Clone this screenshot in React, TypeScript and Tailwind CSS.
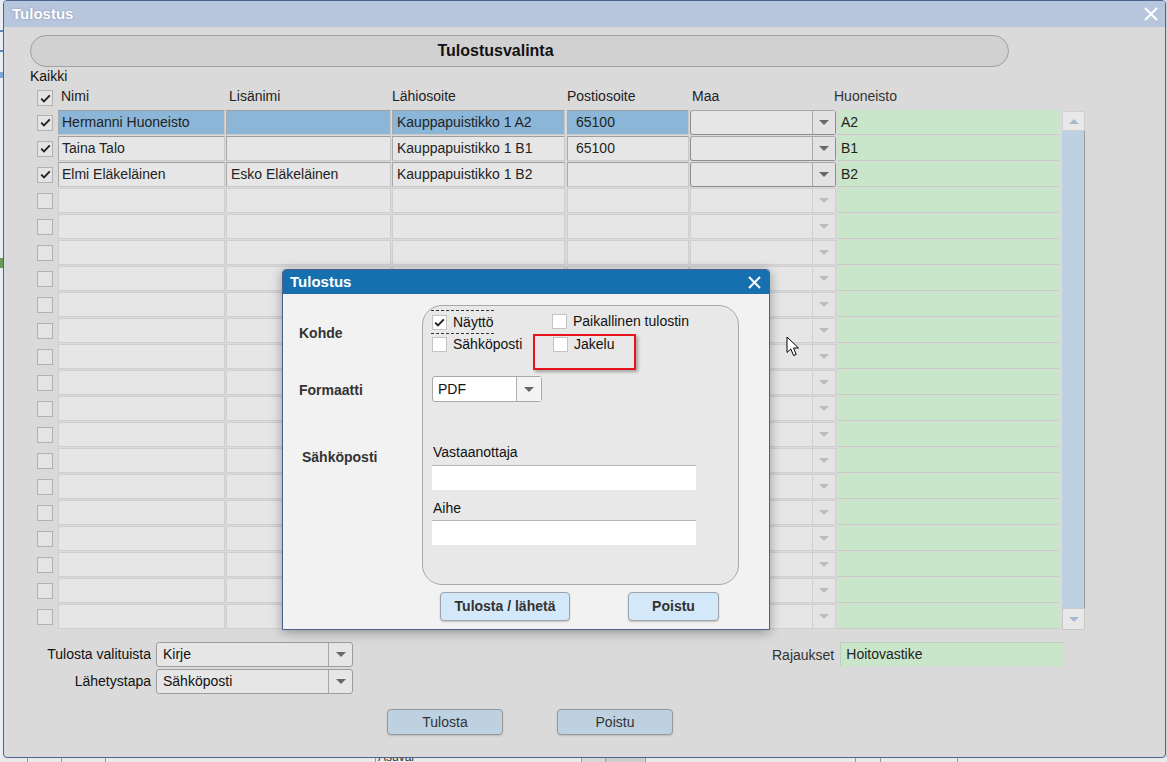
import React from 'react';

type Row = { c: boolean; n: string; l: string; a: string; p: string; h: string; sel?: boolean };

const data: Row[] = [
  { c: true, n: 'Hermanni Huoneisto', l: '', a: 'Kauppapuistikko 1 A2', p: '65100', h: 'A2', sel: true },
  { c: true, n: 'Taina Talo', l: '', a: 'Kauppapuistikko 1 B1', p: '65100', h: 'B1' },
  { c: true, n: 'Elmi Eläkeläinen', l: 'Esko Eläkeläinen', a: 'Kauppapuistikko 1 B2', p: '', h: 'B2' },
];

const rows: (Row | undefined)[] = Array.from({ length: 20 }, (_, i) => data[i]);

function Tick() {
  return (
    <svg width="11" height="9" viewBox="0 0 11 9">
      <path d="M1.2 4.6 L4 7.4 L9.8 1.4" stroke="#222" strokeWidth="1.9" fill="none" />
    </svg>
  );
}

function TableCheck({ checked }: { checked?: boolean }) {
  return (
    <div className="w-[16px] h-[16px] border border-[#b2b2b2] bg-[#e4e4e4] flex items-center justify-center">
      {checked ? <Tick /> : null}
    </div>
  );
}

function DlgCheck({ checked }: { checked?: boolean }) {
  return (
    <div className="w-[15px] h-[15px] border border-[#c4c4c4] bg-white flex items-center justify-center shrink-0">
      {checked ? <Tick /> : null}
    </div>
  );
}

function TriDark() {
  return <span className="w-0 h-0 border-l-[5px] border-r-[5px] border-t-[5px] border-l-transparent border-r-transparent border-t-[#686868]" />;
}
function TriLight() {
  return <span className="w-0 h-0 border-l-[5px] border-r-[5px] border-t-[5px] border-l-transparent border-r-transparent border-t-[#bcbcbc]" />;
}

function TableRow({ r }: { r?: Row }) {
  const base = r
    ? 'border border-[#c9c9c9] border-t-[#9e9e9e] border-l-[#a9a9a9]'
    : 'border border-[#cfcfcf]';
  const bg = r?.sel ? 'bg-[#8bb6d8]' : 'bg-[#e6e6e6]';
  return (
    <div className="flex h-[26px] items-start">
      <div className="w-[21px] h-[25px] flex items-center">
        <TableCheck checked={r?.c} />
      </div>
      <div className={`w-[167px] mr-[1px] h-[25px] ${base} ${bg} pl-[3px] leading-[23px] whitespace-nowrap overflow-hidden`}>{r?.n}</div>
      <div className={`w-[165px] mr-[1px] h-[25px] ${base} ${bg} pl-[4px] leading-[23px] whitespace-nowrap overflow-hidden`}>{r?.l}</div>
      <div className={`w-[173px] mr-[2px] h-[25px] ${base} ${bg} pl-[4px] leading-[23px] whitespace-nowrap overflow-hidden`}>{r?.a}</div>
      <div className={`w-[122px] mr-[1px] h-[25px] ${base} ${bg} pl-[8px] leading-[23px] whitespace-nowrap overflow-hidden`}>{r?.p}</div>
      {r ? (
        <div className="w-[146px] mr-[1px] h-[25px] border border-[#8e8e8e] border-t-[#a8a8a8] rounded-[3px] bg-[#e6e6e6] flex">
          <div className="flex-1" />
          <div className="w-[23px] h-full border-l border-[#a8a8a8] bg-[#e2e2e2] flex items-center justify-center">
            <TriDark />
          </div>
        </div>
      ) : (
        <div className="w-[146px] mr-[1px] h-[25px] border border-[#d0d0d0] bg-[#e6e6e6] flex">
          <div className="flex-1" />
          <div className="w-[23px] h-full border-l border-[#cfcfcf] bg-[#e4e4e4] flex items-center justify-center">
            <TriLight />
          </div>
        </div>
      )}
      <div className="w-[222px] h-[25px] border-b border-[#c3cfc3] bg-[#c9e6ca] pl-[4px] leading-[24px] text-[#222]">{r?.h}</div>
    </div>
  );
}

function Select({ value, h }: { value: string; h: string }) {
  return (
    <div className={`w-[197px] ${h} border border-[#9c9c9c] rounded-[3px] bg-[#e6e6e6] flex`}>
      <div className="flex-1 pl-[6px] flex items-center text-[#111]">{value}</div>
      <div className="w-[24px] h-full border-l border-[#a8a8a8] flex items-center justify-center">
        <TriDark />
      </div>
    </div>
  );
}

export default function App() {
  return (
    <div className="relative w-[1167px] h-[762px] overflow-hidden bg-[#e6e9ee] font-['Liberation_Sans',Arial,sans-serif] text-[14px] text-[#222]">
      <div className="flex h-[758px]">
        {/* backdrop strip left */}
        <div className="w-[3px] h-full bg-[#e9eef4] flex flex-col">
          <div className="h-[30px]" />
          <div className="h-[2px] bg-[#5b86c2]" />
          <div className="h-[18px]" />
          <div className="h-[2px] bg-[#5b86c2]" />
          <div className="h-[20px]" />
          <div className="h-[6px] bg-[#7aa6d8]" />
          <div className="h-[180px]" />
          <div className="h-[10px] bg-[#6a9a5a]" />
        </div>
        {/* main window */}
        <div className="w-[1163px] h-[758px] border border-[#4d6390] rounded-[4px] bg-[#dadada] flex flex-col overflow-hidden">
          <div className="h-[26px] shrink-0 bg-[#b7c6dd] flex items-center justify-between pl-[8px] pr-[7px]">
            <span className="text-white font-bold text-[15px] [text-shadow:0_0_2px_rgba(80,100,140,0.6)]">Tulostus</span>
            <svg width="14" height="14" viewBox="0 0 14 14">
              <path d="M1 1 L13 13 M13 1 L1 13" stroke="#ffffff" strokeWidth="2" />
            </svg>
          </div>

          {/* header pill */}
          <div className="mt-[8px] ml-[26px] w-[979px] h-[32px] rounded-full border border-[#a0a0a0] bg-[#d1d1d1] flex items-center justify-center pr-[48px]">
            <span className="font-bold text-[16px] text-[#111]">Tulostusvalinta</span>
          </div>

          <div className="mt-[1px] ml-[26px] leading-[16px] h-[16px] text-[#111]">Kaikki</div>

          {/* header row */}
          <div className="mt-[3px] ml-[33px] h-[23px] flex items-start leading-[16px]">
            <div className="w-[21px] pt-[3px]">
              <TableCheck checked />
            </div>
            <div className="w-[168px] pl-[3px] pt-[1px]">Nimi</div>
            <div className="w-[166px] pl-[3px] pt-[1px]">Lisänimi</div>
            <div className="w-[175px] pt-[1px]">Lähiosoite</div>
            <div className="w-[125px] pt-[1px]">Postiosoite</div>
            <div className="w-[142px] pt-[1px]">Maa</div>
            <div className="w-[225px] pt-[1px] text-[#333]">Huoneisto</div>
          </div>

          {/* table */}
          <div className="ml-[33px] flex h-[520px]">
            <div className="flex flex-col">
              {rows.map((r, i) => (
                <TableRow key={i} r={r} />
              ))}
            </div>
            <div className="ml-[3px] mt-[1px] w-[23px] h-[519px] flex flex-col">
              <div className="h-[20px] bg-[#e8e8e8] border border-[#d0d0d0] flex items-center justify-center">
                <span className="w-0 h-0 border-l-[5px] border-r-[5px] border-b-[5px] border-l-transparent border-r-transparent border-b-[#a7b9d1]" />
              </div>
              <div className="flex-1 bg-[#bed1e2] border-r border-[#9a9a9a]" />
              <div className="h-[22px] bg-[#e8e8e8] border border-[#c8c8c8] flex items-center justify-center">
                <span className="w-0 h-0 border-l-[5px] border-r-[5px] border-t-[5px] border-l-transparent border-r-transparent border-t-[#a7b9d1]" />
              </div>
            </div>
          </div>

          {/* bottom area */}
          <div className="mt-[12px] flex items-start">
            <div className="flex flex-col">
              <div className="flex items-center h-[25px]">
                <div className="w-[147px] text-right text-[#111]">Tulosta valituista</div>
                <div className="ml-[5px]">
                  <Select value="Kirje" h="h-[25px]" />
                </div>
              </div>
              <div className="flex items-center h-[25px] mt-[2px]">
                <div className="w-[147px] text-right text-[#111]">Lähetystapa</div>
                <div className="ml-[5px]">
                  <Select value="Sähköposti" h="h-[25px]" />
                </div>
              </div>
            </div>
            <div className="ml-[419px] flex items-center gap-[6px] h-[24px]">
              <span className="text-[#333] mt-[3px]">Rajaukset</span>
              <div className="w-[224px] h-[24px] bg-[#c9e6ca] border-t border-l border-[#bfcfbf] pl-[5px] flex items-center text-[#222]">
                Hoitovastike
              </div>
            </div>
          </div>

          <div className="mt-[15px] ml-[383px] flex gap-[54px]">
            <div className="w-[116px] h-[26px] rounded-[4px] border border-[#999] bg-[#bdd1e1] flex items-center justify-center text-[#333] shadow-[0_1px_2px_rgba(0,0,0,0.15)]">
              Tulosta
            </div>
            <div className="w-[116px] h-[26px] rounded-[4px] border border-[#999] bg-[#bdd1e1] flex items-center justify-center text-[#333] shadow-[0_1px_2px_rgba(0,0,0,0.15)]">
              Poistu
            </div>
          </div>
        </div>
        <div className="w-[1px] h-full bg-[#cfd3d8]" />
      </div>

      {/* bottom backdrop strip */}
      <div className="h-[4px] flex bg-[#e9e9e9] text-[12px] leading-[10px] overflow-hidden">
        <div className="w-[28px] border-r border-[#9a9a9a]" />
        <div className="w-[34px] border-r border-[#9a9a9a]" />
        <div className="w-[44px] border-r border-[#9a9a9a]" />
        <div className="w-[270px] border-r border-[#9a9a9a]" />
        <div className="w-[206px] border-r border-[#9a9a9a] pl-[2px] -mt-[6px] text-[#333]">Asuval</div>
        <div className="w-[24px] border-r border-[#9a9a9a] bg-[#d8d8d8]" />
        <div className="w-[40px] border-r border-[#9a9a9a] bg-[#cdcdcd]" />
        <div className="w-[210px] border-r border-[#9a9a9a]" />
        <div className="w-[25px] border-r border-[#9a9a9a]" />
        <div className="w-[77px] border-r border-[#9a9a9a]" />
      </div>

      {/* dialog */}
      <div className="absolute left-[282px] top-[269px] w-[488px] h-[361px] border border-[#4a5f8c] rounded-t-[4px] bg-[#f2f2f2] shadow-[0_2px_12px_rgba(0,0,0,0.35)] flex flex-col">
        <div className="h-[24px] shrink-0 bg-[#1670af] rounded-t-[3px] flex items-center justify-between pl-[7px] pr-[8px]">
          <span className="text-white font-bold text-[15px]">Tulostus</span>
          <svg width="13" height="13" viewBox="0 0 13 13">
            <path d="M1 1 L12 12 M12 1 L1 12" stroke="#ffffff" strokeWidth="2" />
          </svg>
        </div>
        <div className="flex">
          <div className="w-[139px] flex flex-col leading-[16px] font-bold text-[#333]">
            <div className="pt-[31px] pl-[16px]">Kohde</div>
            <div className="mt-[41px] pl-[16px]">Formaatti</div>
            <div className="mt-[51px] pl-[19px]">Sähköposti</div>
          </div>
          <div className="mt-[11px] w-[317px] h-[280px] rounded-[20px] border border-[#a8a8a8] bg-[#e8e8e8] flex flex-col pl-[8px] pt-[4px]">
            <div className="flex h-[24px]">
              <div className="w-[121px]">
                <div className="w-[63px] h-[24px] border-y border-dashed border-[#333] flex items-center pl-[1px]">
                  <DlgCheck checked />
                  <span className="ml-[6px] text-[#111]">Näyttö</span>
                </div>
              </div>
              <div className="flex items-center -mt-[2px]">
                <DlgCheck />
                <span className="ml-[6px] text-[#111]">Paikallinen tulostin</span>
              </div>
            </div>
            <div className="flex h-[16px] mt-[2px]">
              <div className="w-[121px] flex items-center pl-[1px]">
                <DlgCheck />
                <span className="ml-[6px] text-[#111]">Sähköposti</span>
              </div>
              <div className="flex items-center pl-[1px]">
                <DlgCheck />
                <span className="ml-[6px] text-[#111]">Jakelu</span>
              </div>
            </div>
            <div className="mt-[24px] ml-[1px] w-[110px] h-[26px] border border-[#a8a8a8] rounded-[3px] bg-white flex">
              <div className="flex-1 pl-[5px] flex items-center text-[#111]">PDF</div>
              <div className="w-[25px] h-full border-l border-[#b0b0b0] bg-[#f4f4f4] flex items-center justify-center">
                <TriDark />
              </div>
            </div>
            <div className="mt-[42px] ml-[2px] leading-[16px] text-[#111]">Vastaanottaja</div>
            <div className="mt-[5px] ml-[1px] w-[264px] h-[25px] bg-white border-t border-[#b4b4b4]" />
            <div className="mt-[10px] ml-[2px] leading-[16px] text-[#111]">Aihe</div>
            <div className="mt-[4px] ml-[1px] w-[264px] h-[25px] bg-white border-t border-[#b4b4b4]" />
          </div>
        </div>
        <div className="mt-[7px] ml-[157px] flex gap-[58px]">
          <div className="w-[130px] h-[29px] rounded-[4px] border border-[#9ca3aa] bg-[#d3e8f8] flex items-center justify-center font-bold text-[#333] shadow-[0_1px_2px_rgba(0,0,0,0.2)]">
            Tulosta / lähetä
          </div>
          <div className="w-[91px] h-[29px] rounded-[4px] border border-[#9ca3aa] bg-[#d3e8f8] flex items-center justify-center font-bold text-[#333] shadow-[0_1px_2px_rgba(0,0,0,0.2)]">
            Poistu
          </div>
        </div>

        {/* red highlight */}
        <div className="absolute left-[250px] top-[64px] w-[103px] h-[36px] border-2 border-[#e8141b] shadow-[2px_2px_3px_rgba(0,0,0,0.3)]" />
      </div>

      {/* mouse cursor */}
      <svg className="absolute left-[786px] top-[336px]" width="14" height="21" viewBox="0 0 14 21">
        <path d="M1 1 L1 16.5 L4.8 13 L7.6 19.5 L10.2 18.4 L7.5 12 L12.5 12 Z" fill="#ffffff" stroke="#000000" strokeWidth="1" strokeLinejoin="round" />
      </svg>
    </div>
  );
}
